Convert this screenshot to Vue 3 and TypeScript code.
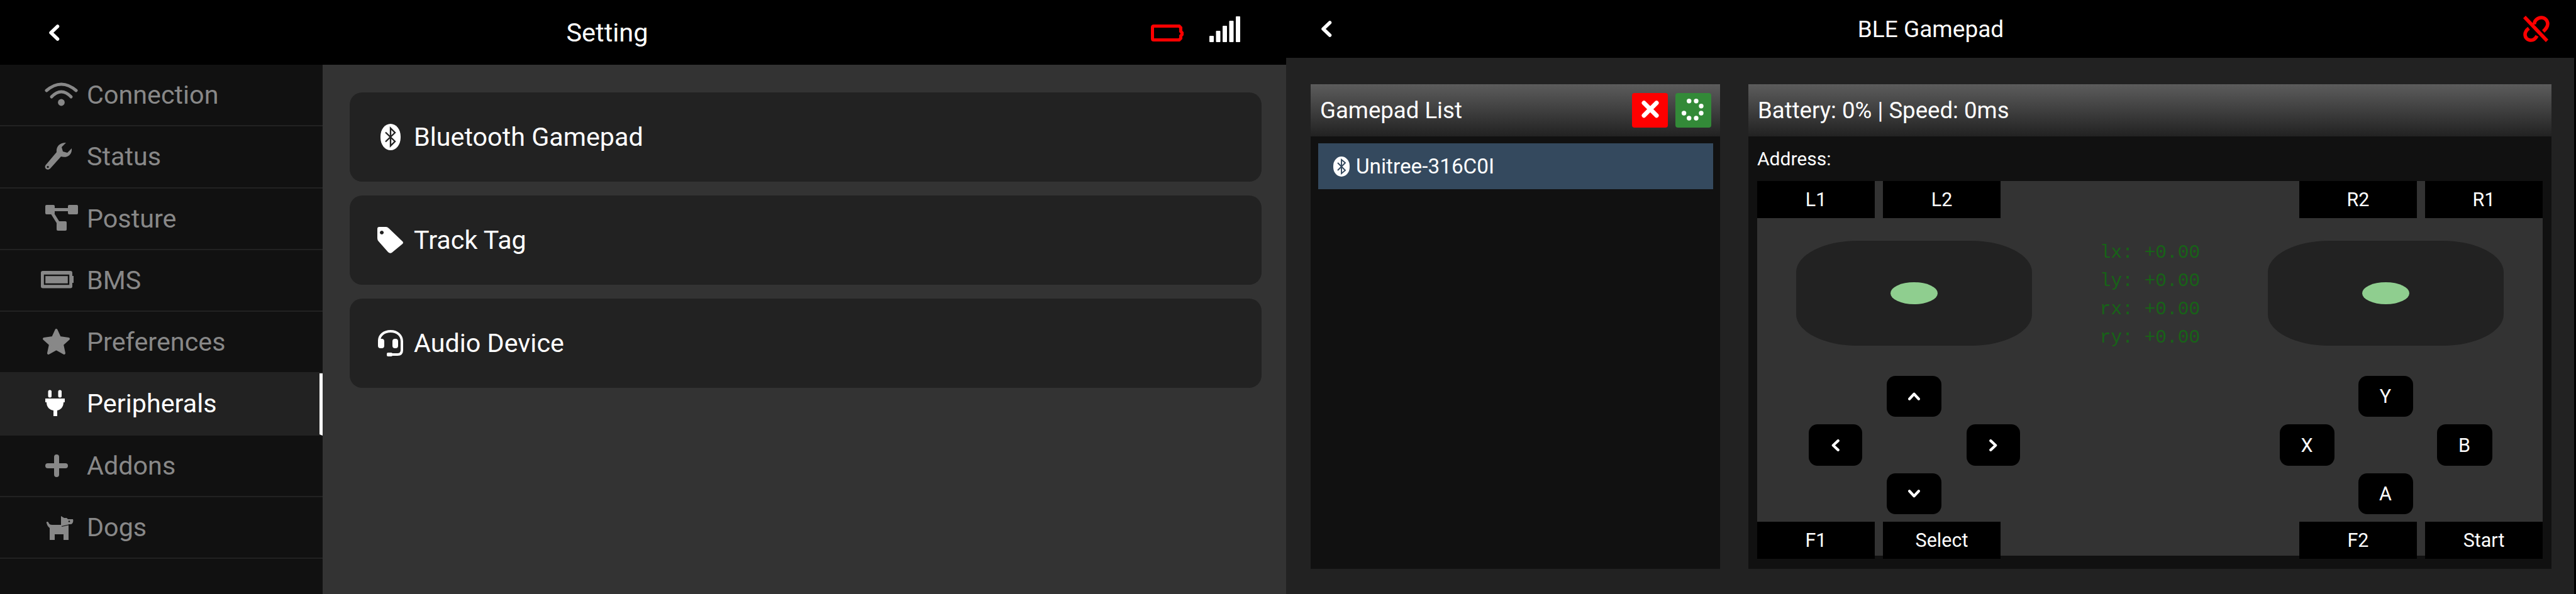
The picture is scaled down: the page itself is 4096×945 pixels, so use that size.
<script setup lang="ts">
interface NavItem {
  name: string
  icon: string
  active?: boolean
}

const navItems: NavItem[] = [
  { name: 'Connection', icon: 'wifi' },
  { name: 'Status', icon: 'wrench' },
  { name: 'Posture', icon: 'sitemap' },
  { name: 'BMS', icon: 'battery' },
  { name: 'Preferences', icon: 'star' },
  { name: 'Peripherals', icon: 'plug', active: true },
  { name: 'Addons', icon: 'plus' },
  { name: 'Dogs', icon: 'dog' },
]

const signalBars = [
  { x: 0, h: 10 },
  { x: 10.5, h: 18 },
  { x: 21, h: 26 },
  { x: 31.5, h: 34 },
  { x: 42, h: 41 },
]

const spinnerDots = [
  [21.7, 12.7], [33, 12.7], [41, 20.7], [41, 32], [33, 40], [21.7, 40], [13.6, 32],
]

const axes = ['lx: +0.00', 'ly: +0.00', 'rx: +0.00', 'ry: +0.00']
</script>

<template>
  <div class="screen">
    <section class="settings">
      <header class="topbar settings-bar">
        <svg class="back" viewBox="0 0 18 26"><path d="M14.5 3 L4 13 L14.5 23" /></svg>
        <div class="title">Setting</div>
        <div class="status">
          <svg class="bat" width="52" height="27" viewBox="0 0 52 27">
            <path d="M4.5 2.5 H45 L47.5 5 V11 L49.5 13 V16 L47.5 18 V22 L45 24.5 H4.5 Q2.5 24.5 2.5 22.5 V4.5 Q2.5 2.5 4.5 2.5 Z" />
          </svg>
          <svg width="49" height="41" viewBox="0 0 49 41">
            <rect v-for="b in signalBars" :key="b.x" :x="b.x" :y="41 - b.h" width="7" :height="b.h" rx="1" fill="#fff" />
          </svg>
        </div>
      </header>
      <div class="settings-body">
        <nav class="sidebar">
          <div v-for="item in navItems" :key="item.name" class="nav-row" :class="{ active: item.active }">
            <svg class="nav-icon" viewBox="0 0 78 60">
              <g v-if="item.icon === 'wifi'">
                <path class="line" d="M14 23 Q37.5 3 61 23" />
                <path class="line" d="M22 33 Q37.5 17 53 33" />
                <circle cx="37.5" cy="42" r="5.4" />
              </g>
              <path
                v-else-if="item.icon === 'wrench'"
                fill-rule="evenodd"
                d="M30 23 C29 15 34 8 45 8 L38 15 L40 22 L47 24 L54 17 C55 27 47 33 37 30 L20 49 C17 52 13 51 12 48 C11 46 12 44 14 42 Z M16 45 a1.6 1.6 0 1 0 0.1 0 Z"
              />
              <g v-else-if="item.icon === 'sitemap'">
                <rect x="12" y="8" width="15" height="15" rx="2" />
                <rect x="48" y="8" width="16" height="15" rx="2" />
                <rect x="30" y="34" width="16" height="15" rx="2" />
                <path class="line butt" d="M25 15.5 H50 M23 21 L33 37" />
              </g>
              <g v-else-if="item.icon === 'battery'">
                <path d="M8 15 H52 Q55 15 55 18 V23 H57 V34 H55 V39.5 Q55 42.5 52 42.5 H8 Q5 42.5 5 39.5 V18 Q5 15 8 15 Z" />
                <rect x="11" y="22" width="38" height="14" fill="none" stroke="#111" stroke-width="2.4" />
              </g>
              <path
                v-else-if="item.icon === 'star'"
                class="round-fill"
                d="M29.5 11 L35 23 L49 25 L39 34 L42 48 L29.5 41 L17 48 L20 34 L10 25 L24 23 Z"
              />
              <g v-else-if="item.icon === 'plug'">
                <rect x="16.5" y="8.5" width="5.5" height="12" rx="2.5" />
                <rect x="32.5" y="8.5" width="5.5" height="12" rx="2.5" />
                <path d="M12 22 H43 V28 H41 C41 36 36 40 31 41 V50 H25 V41 C19 40 14 36 14 28 H12 Z" />
              </g>
              <path v-else-if="item.icon === 'plus'" class="line thick" d="M30 16 V44 M16 30 H44" />
              <g v-else>
                <path d="M14 23 C13 21 16 20 17 22 C18 25 20 26 23 26 H37 V12 L42 15 H46 L48 17 H56 C57 20 56 24 53 25 H49 V50 H41 V41 H27 V50 H19 V31 C16 29 15 26 14 23 Z" />
                <path d="M38 28.5 L49 26" fill="none" stroke="#111" stroke-width="1.2" />
                <circle cx="50" cy="20.5" r="1.3" fill="#111" />
              </g>
            </svg>
            <span>{{ item.name }}</span>
          </div>
        </nav>
        <main class="settings-main">
          <div class="menu-card">
            <svg class="menu-icon" viewBox="0 0 42 42">
              <rect x="5" y="0" width="32" height="42" rx="16" ry="20" fill="#fff" />
              <path class="bt-mark" d="M13 13.5 L28 28 L21 35 V7 L28 14 L13 28.5" />
            </svg>
            <span>Bluetooth Gamepad</span>
          </div>
          <div class="menu-card">
            <svg class="menu-icon" viewBox="0 0 42 42">
              <path
                fill="#fff"
                fill-rule="evenodd"
                d="M3 0 H14 Q16 0 18 2 L40 23 Q42 25 40 27 L23 41 Q20 43 17 40 L2 23 Q0 21 0 18 V3 Q0 0 3 0 Z M7 6 a3 3 0 1 0 0.1 0 Z"
              />
            </svg>
            <span>Track Tag</span>
          </div>
          <div class="menu-card">
            <svg class="menu-icon" viewBox="0 0 42 42">
              <path class="headset" d="M3 17 C3 8 11 2 21 2 C32 2 39 9 39 18 V32 C39 37 36 39 32 39 H20" />
              <rect x="1" y="14" width="10" height="15" rx="4" fill="#fff" />
              <rect x="24" y="14" width="9" height="15" rx="4" fill="#fff" />
              <rect x="15" y="36" width="9" height="6" rx="2" fill="#fff" />
            </svg>
            <span>Audio Device</span>
          </div>
        </main>
      </div>
    </section>

    <section class="gamepad">
      <header class="topbar gamepad-bar">
        <svg class="back" viewBox="0 0 18 26"><path d="M14.5 3 L4 13 L14.5 23" /></svg>
        <div class="title small">BLE Gamepad</div>
        <svg class="unlink" width="42" height="42" viewBox="0 0 42 42">
          <path d="M18 14 C17 8 23 3 29 3 C35 3 39 8 39 13 C39 18 36 21 32 25" />
          <path d="M9 20 C5 23 3 27 3 30 C3 35 7 39 12 39 C17 39 20 36 22 32" />
          <path d="M2 2 L38 40" />
        </svg>
      </header>
      <div class="gamepad-body">
        <div class="panel list-panel">
          <div class="panel-head">
            <span>Gamepad List</span>
            <div class="head-btns">
              <button class="square red">
                <svg width="58" height="55" viewBox="0 0 58 55">
                  <path d="M19 15.7 L39 35.7 M39 15.7 L19 35.7" fill="none" stroke="#fff" stroke-width="7" stroke-linecap="round" />
                </svg>
              </button>
              <button class="square green">
                <svg width="57" height="55" viewBox="0 0 57 55">
                  <circle v-for="(d, i) in spinnerDots" :key="i" :cx="d[0]" :cy="d[1]" r="3.7" fill="#fff" />
                </svg>
              </button>
            </div>
          </div>
          <div class="panel-body list-body">
            <div class="pad-item">
              <svg class="item-icon" viewBox="0 0 26 32">
                <rect width="26" height="32" rx="13" ry="15" fill="#fff" />
                <path class="bt-mark item" d="M7 10 L19 22 L13 27 V5 L19 10 L7 22" />
              </svg>
              <span>Unitree-316C0I</span>
            </div>
          </div>
        </div>

        <div class="panel info-panel">
          <div class="panel-head"><span>Battery: 0% | Speed: 0ms</span></div>
          <div class="panel-body info-body">
            <div class="address">Address:</div>
            <div class="pad">
              <div class="pad-row">
                <div class="pair">
                  <div class="flat">L1</div>
                  <div class="flat">L2</div>
                </div>
                <div class="pair">
                  <div class="flat">R2</div>
                  <div class="flat">R1</div>
                </div>
              </div>

              <div class="pad-middle">
                <div class="side">
                  <div class="stick"><div class="knob"></div></div>
                  <div class="cross dpad">
                    <div class="key up">
                      <svg class="chev rot-up" viewBox="0 0 14 18"><path d="M11 2 L3.5 9 L11 16" /></svg>
                    </div>
                    <div class="key left">
                      <svg class="chev" viewBox="0 0 14 18"><path d="M11 2 L3.5 9 L11 16" /></svg>
                    </div>
                    <div class="key right">
                      <svg class="chev rot-right" viewBox="0 0 14 18"><path d="M11 2 L3.5 9 L11 16" /></svg>
                    </div>
                    <div class="key down">
                      <svg class="chev rot-down" viewBox="0 0 14 18"><path d="M11 2 L3.5 9 L11 16" /></svg>
                    </div>
                  </div>
                </div>
                <div class="axes">
                  <div v-for="a in axes" :key="a">{{ a }}</div>
                </div>
                <div class="side">
                  <div class="stick"><div class="knob"></div></div>
                  <div class="cross abxy">
                    <div class="key up">Y</div>
                    <div class="key left">X</div>
                    <div class="key right">B</div>
                    <div class="key down">A</div>
                  </div>
                </div>
              </div>

              <div class="pad-row">
                <div class="pair">
                  <div class="flat">F1</div>
                  <div class="flat">Select</div>
                </div>
                <div class="pair">
                  <div class="flat">F2</div>
                  <div class="flat">Start</div>
                </div>
              </div>
            </div>
          </div>
        </div>
      </div>
    </section>
  </div>
</template>

<style>
html,
body {
  margin: 0;
  background: #000;
}
</style>

<style scoped>
.screen {
  display: flex;
  width: 4096px;
  height: 945px;
  overflow: hidden;
  background: #000;
  color: #fff;
  font-family: Roboto, "Liberation Sans", sans-serif;
}

.settings {
  width: 2045px;
  display: flex;
  flex-direction: column;
}

.gamepad {
  width: 2048px;
  display: flex;
  flex-direction: column;
}

.topbar {
  display: flex;
  align-items: center;
  justify-content: space-between;
  background: #000;
  flex-shrink: 0;
}

.settings-bar {
  height: 103px;
  padding: 0 73px 0 77px;
}

.gamepad-bar {
  height: 92px;
  padding: 0 39px 0 55px;
}

.back {
  width: 18px;
  height: 26px;
}

.back path {
  fill: none;
  stroke: #fff;
  stroke-width: 5.5;
  stroke-linecap: round;
  stroke-linejoin: round;
}

.title {
  margin-left: 6px;
  font-size: 41.5px;
}

.title.small {
  margin-left: 10px;
  font-size: 37px;
}

.status {
  display: flex;
  align-items: flex-end;
  gap: 41px;
  margin-bottom: 11px;
}

.bat {
  margin-bottom: 1px;
}

.bat path {
  fill: none;
  stroke: #f00;
  stroke-width: 5;
}

.unlink path {
  fill: none;
  stroke: #f00;
  stroke-width: 5.5;
}

.settings-body {
  flex: 1;
  display: flex;
  min-height: 0;
}

.sidebar {
  width: 513px;
  background: #111;
  flex-shrink: 0;
}

.nav-row {
  height: 98.25px;
  box-sizing: border-box;
  display: flex;
  align-items: center;
  padding-left: 60px;
  border-bottom: 2px solid #222;
  font-size: 41.3px;
  color: #888;
  fill: #888;
}

.nav-row.active {
  background: #222;
  color: #fff;
  fill: #fff;
  border-right: 5px solid #fff;
}

.nav-icon {
  width: 78px;
  height: 60px;
  flex-shrink: 0;
}

.line {
  fill: none;
  stroke: #888;
  stroke-width: 5;
  stroke-linecap: round;
}

.line.butt {
  stroke-linecap: butt;
}

.line.thick {
  stroke-width: 8;
}

.round-fill {
  stroke: #888;
  stroke-width: 4;
  stroke-linejoin: round;
}

.settings-main {
  flex: 1;
  display: flex;
  flex-direction: column;
  gap: 22px;
  padding: 44px 39px 0 43px;
  background: #333;
}

.menu-card {
  height: 142px;
  display: flex;
  align-items: center;
  gap: 16px;
  padding-left: 44px;
  border-radius: 20px;
  background: #222;
  font-size: 41.3px;
}

.menu-icon {
  width: 42px;
  height: 42px;
  flex-shrink: 0;
}

.bt-mark {
  fill: none;
  stroke: #222;
  stroke-width: 2.4;
}

.bt-mark.item {
  stroke: #34495e;
  stroke-width: 1.9;
}

.headset {
  fill: none;
  stroke: #fff;
  stroke-width: 4;
}

.gamepad-body {
  flex: 1;
  display: flex;
  gap: 45px;
  padding: 42px 36px 40px 39px;
  background: #222;
  min-height: 0;
}

.panel {
  display: flex;
  flex-direction: column;
}

.list-panel {
  width: 651px;
}

.info-panel {
  flex: 1;
}

.panel-head {
  height: 83px;
  flex-shrink: 0;
  box-sizing: border-box;
  display: flex;
  align-items: center;
  justify-content: space-between;
  padding: 0 14px 0 15px;
  background: linear-gradient(#5c5c5c, #222);
  font-size: 36.6px;
}

.head-btns {
  display: flex;
  gap: 12px;
}

.square {
  width: 57px;
  height: 55px;
  padding: 0;
  border: 0;
  border-radius: 4px;
  display: block;
}

.square svg {
  display: block;
}

.red {
  background: #f00;
}

.green {
  background: #338a38;
}

.panel-body {
  flex: 1;
  background: #111;
  min-height: 0;
}

.list-body {
  padding: 11px 11px 0 12px;
}

.pad-item {
  height: 73px;
  display: flex;
  align-items: center;
  gap: 10px;
  padding-left: 24px;
  background: #34495e;
  font-size: 33.3px;
}

.item-icon {
  width: 26px;
  height: 32px;
  flex-shrink: 0;
}

.info-body {
  padding: 0 14px;
  font-size: 30.5px;
}

.address {
  height: 71px;
  display: flex;
  align-items: center;
  font-size: 30px;
}

.pad {
  height: 596px;
  display: flex;
  flex-direction: column;
  background: #333;
}

.pad-row {
  display: flex;
  justify-content: space-between;
  flex-shrink: 0;
}

.pair {
  display: flex;
  gap: 13px;
}

.flat {
  width: 187px;
  height: 59px;
  display: flex;
  align-items: center;
  justify-content: center;
  background: #000;
}

.pad-middle {
  display: grid;
  grid-template-columns: 499px 1fr 499px;
  flex-shrink: 0;
}

.side {
  display: flex;
  flex-direction: column;
  align-items: center;
  padding: 36px 0 12px;
}

.stick {
  width: 375px;
  height: 167px;
  display: flex;
  align-items: center;
  justify-content: center;
  background: #222;
  border-radius: 26% / 30%;
}

.knob {
  width: 75px;
  height: 35px;
  border-radius: 50%;
  background: #8fce8f;
}

.cross {
  margin-top: 48px;
  display: grid;
  grid-template-rows: 65px 66px 65px;
  row-gap: 12px;
}

.dpad {
  grid-template-columns: 85px 87px 85px;
  column-gap: 39.5px;
}

.abxy {
  grid-template-columns: 87px 87px 88px;
  column-gap: 38px;
}

.key {
  display: flex;
  align-items: center;
  justify-content: center;
  background: #000;
  border-radius: 14px;
}

.key.up {
  grid-area: 1 / 2;
}

.key.left {
  grid-area: 2 / 1;
}

.key.right {
  grid-area: 2 / 3;
}

.key.down {
  grid-area: 3 / 2;
}

.chev {
  width: 15px;
  height: 19px;
  fill: none;
  stroke: #fff;
  stroke-width: 4;
  stroke-linecap: round;
  stroke-linejoin: round;
}

.rot-up {
  transform: rotate(90deg);
}

.rot-right {
  transform: rotate(180deg);
}

.rot-down {
  transform: rotate(-90deg);
}

.axes {
  padding-top: 33px;
  display: flex;
  flex-direction: column;
  align-items: center;
  color: #176317;
  font-family: "Liberation Mono", monospace;
  font-size: 29.5px;
  line-height: 45px;
  white-space: pre;
}
</style>
